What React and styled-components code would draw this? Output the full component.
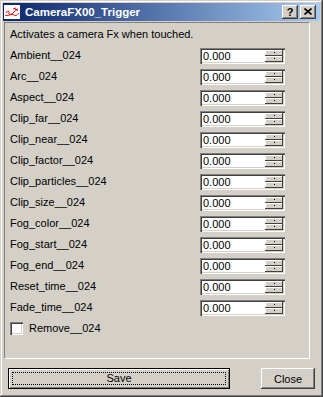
import React from 'react';
import styled, { createGlobalStyle } from 'styled-components';

const Global = createGlobalStyle`
  html, body { margin: 0; padding: 0; background: #d4d0c8; }
  body { font-family: "Liberation Sans", Arial, sans-serif; font-size: 11px; color: #000; }
  * { box-sizing: border-box; }
`;

const Window = styled.div`
  width: 323px;
  height: 397px;
  background: #d4d0c8;
  padding: 3px;
  box-shadow: inset -1px -1px #404040, inset 1px 1px #d4d0c8,
    inset -2px -2px #808080, inset 2px 2px #ffffff;
  display: flex;
  flex-direction: column;
`;

const TitleBar = styled.div`
  height: 18px;
  display: flex;
  align-items: center;
  padding: 0 4px 0 1px;
  background: linear-gradient(to right, #0a246a, #a6caf0);
`;

const TitleText = styled.div`
  flex: 1;
  margin-left: 5px;
  color: #fff;
  font-weight: bold;
  font-size: 11.5px;
  line-height: 18px;
  white-space: nowrap;
`;

const CapButton = styled.div`
  width: 16px;
  height: 14px;
  margin-left: ${(p) => (p.$gap ? '2px' : '0')};
  background: #d4d0c8;
  box-shadow: inset -1px -1px #404040, inset 1px 1px #ffffff,
    inset -2px -2px #808080, inset 2px 2px #d4d0c8;
  display: flex;
  align-items: center;
  justify-content: center;
  font-weight: bold;
  font-size: 11px;
  line-height: 14px;
  padding-bottom: 1px;
`;

const Panel = styled.div`
  margin: 1px 10px 0 1px;
  height: 337px;
  border-top: 1px solid #808080;
  border-left: 1px solid #808080;
  border-bottom: 1px solid #ffffff;
  border-right: 1px solid #ffffff;
  padding: 5px 0 0 5px;
  display: flex;
  flex-direction: column;
`;

const Description = styled.div`
  line-height: 13px;
  margin-bottom: 4px;
  white-space: nowrap;
`;

const Row = styled.div`
  display: grid;
  grid-template-columns: 190px 85px;
  align-items: center;
  height: 21px;
`;

const Label = styled.div`
  line-height: 13px;
  white-space: nowrap;
`;

const Field = styled.div`
  height: 16px;
  display: flex;
  padding: 2px;
  background: #fff;
  box-shadow: inset 1px 1px #808080, inset 2px 2px #404040,
    inset -1px -1px #ffffff, inset -2px -2px #d4d0c8;
`;

const FieldText = styled.div`
  flex: 1;
  padding-left: 1px;
  line-height: 12px;
  font-size: 11px;
`;

const Spinner = styled.div`
  width: 18px;
  display: flex;
  flex-direction: column;
`;

const SpinButton = styled.div`
  flex: 1;
  background: #d4d0c8;
  box-shadow: inset -1px -1px #404040, inset 1px 1px #ffffff;
  display: flex;
  align-items: center;
  justify-content: center;
`;

const SpinDot = styled.div`
  width: 1px;
  height: 1px;
  background: #000;
`;

const CheckRow = styled.div`
  display: flex;
  align-items: center;
  height: 21px;
`;

const CheckBox = styled.div`
  width: 13px;
  height: 13px;
  background: #fff;
  box-shadow: inset 1px 1px #808080, inset 2px 2px #404040,
    inset -1px -1px #ffffff, inset -2px -2px #d4d0c8;
`;

const CheckLabel = styled.div`
  margin-left: 6px;
  line-height: 13px;
`;

const ButtonRow = styled.div`
  display: flex;
  margin-top: 9px;
  padding-left: 5px;
`;

const DefaultButton = styled.div`
  width: 222px;
  height: 21px;
  border: 1px solid #000;
  background: #d4d0c8;
  box-shadow: inset 1px 1px #ffffff, inset -1px -1px #808080;
  padding: 3px;
  display: flex;
`;

const FocusRing = styled.div`
  flex: 1;
  border: 1px dotted #000;
  display: flex;
  align-items: center;
  justify-content: center;
  line-height: 11px;
`;

const PushButton = styled.div`
  width: 54px;
  height: 21px;
  margin-left: 31px;
  background: #d4d0c8;
  box-shadow: inset -1px -1px #404040, inset 1px 1px #ffffff,
    inset -2px -2px #808080, inset 2px 2px #d4d0c8;
  display: flex;
  align-items: center;
  justify-content: center;
`;

const AppIcon = () => (
  <svg width="16" height="14" viewBox="0 0 16 14">
    <rect x="0" y="0" width="16" height="14" fill="#fff" />
    <path d="M2 8 C3 5, 6 6, 5 8 S 8 10, 10 7 S 13 5, 14 6" fill="none" stroke="#e00000" strokeWidth="1" />
    <path d="M1 10 C4 12, 7 8, 10 10 S 13 9, 15 8" fill="none" stroke="#e00000" strokeWidth="1" />
    <path d="M9 4 L12 3 M11 5 L14 4" fill="none" stroke="#e00000" strokeWidth="1" />
  </svg>
);

const CloseGlyph = () => (
  <svg width="8" height="7" viewBox="0 0 8 7">
    <path d="M0.5 0.5 L7.5 6.5 M7.5 0.5 L0.5 6.5" stroke="#000" strokeWidth="1.6" />
  </svg>
);

const fields = [
  'Ambient__024',
  'Arc__024',
  'Aspect__024',
  'Clip_far__024',
  'Clip_near__024',
  'Clip_factor__024',
  'Clip_particles__024',
  'Clip_size__024',
  'Fog_color__024',
  'Fog_start__024',
  'Fog_end__024',
  'Reset_time__024',
  'Fade_time__024',
];

export default function App() {
  return (
    <>
      <Global />
      <Window>
        <TitleBar>
          <AppIcon />
          <TitleText>CameraFX00_Trigger</TitleText>
          <CapButton>?</CapButton>
          <CapButton $gap>
            <CloseGlyph />
          </CapButton>
        </TitleBar>
        <Panel>
          <Description>Activates a camera Fx when touched.</Description>
          {fields.map((f) => (
            <Row key={f}>
              <Label>{f}</Label>
              <Field>
                <FieldText>0.000</FieldText>
                <Spinner>
                  <SpinButton>
                    <SpinDot />
                  </SpinButton>
                  <SpinButton>
                    <SpinDot />
                  </SpinButton>
                </Spinner>
              </Field>
            </Row>
          ))}
          <CheckRow>
            <CheckBox />
            <CheckLabel>Remove__024</CheckLabel>
          </CheckRow>
        </Panel>
        <ButtonRow>
          <DefaultButton>
            <FocusRing>Save</FocusRing>
          </DefaultButton>
          <PushButton>Close</PushButton>
        </ButtonRow>
      </Window>
    </>
  );
}
